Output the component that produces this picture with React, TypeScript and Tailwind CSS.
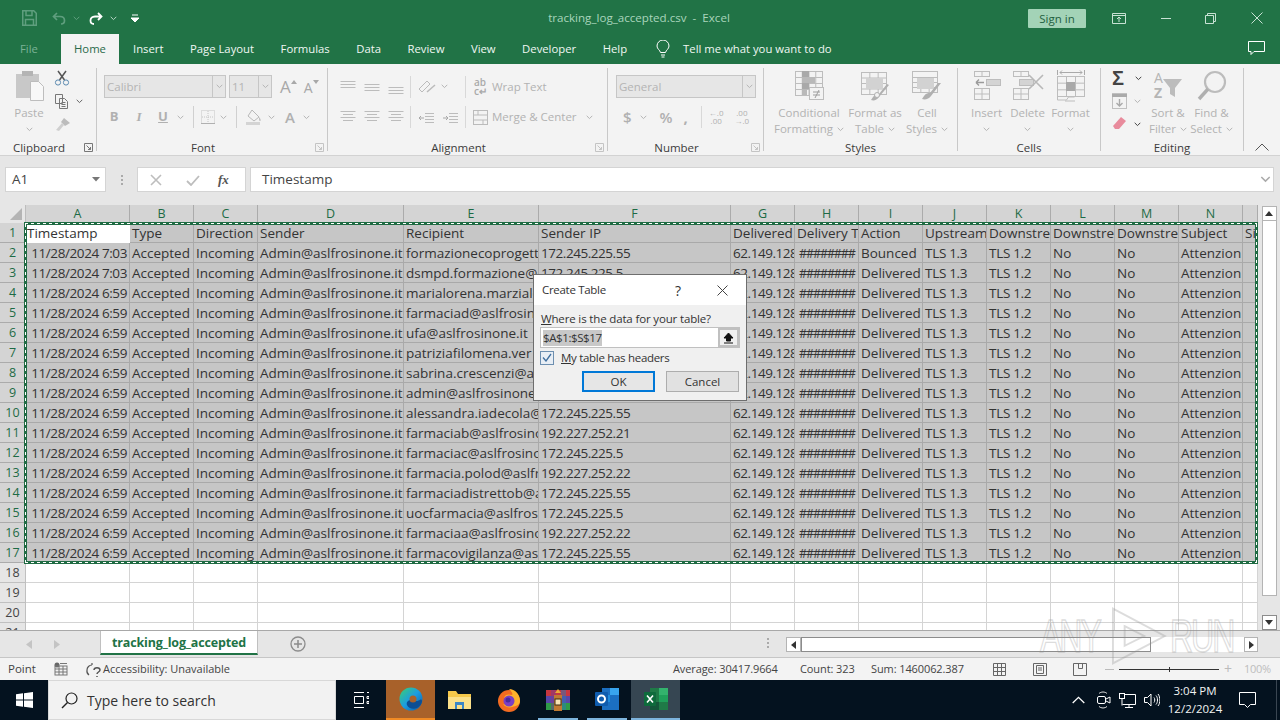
import React from "react";

const G = "#b4b4b4";
const COLS = ["w-[104px]","w-[64px]","w-[64px]","w-[146px]","w-[135px]","w-[192px]","w-[64px]","w-[64px]","w-[64px]","w-[64px]","w-[64px]","w-[64px]","w-[64px]","w-[64px]","w-[15px]"];
const LETTERS = ["A","B","C","D","E","F","G","H","I","J","K","L","M","N",""];
const HEAD = ["Timestamp","Type","Direction","Sender","Recipient","Sender IP","Delivered","Delivery T","Action","Upstream","Downstre","Downstre","Downstre","Subject","Si"];
const ROWS: string[][] = [
  ["11/28/2024 7:03","formazionecoprogett","172.245.225.55","Bounced"],
  ["11/28/2024 7:03","dsmpd.formazione@","172.245.225.5","Delivered"],
  ["11/28/2024 6:59","marialorena.marziale","172.245.225.55","Delivered"],
  ["11/28/2024 6:59","farmaciad@aslfrosin","172.245.225.55","Delivered"],
  ["11/28/2024 6:59","ufa@aslfrosinone.it","172.245.225.55","Delivered"],
  ["11/28/2024 6:59","patriziafilomena.ver","172.245.225.55","Delivered"],
  ["11/28/2024 6:59","sabrina.crescenzi@as","172.245.225.55","Delivered"],
  ["11/28/2024 6:59","admin@aslfrosinone","172.245.225.55","Delivered"],
  ["11/28/2024 6:59","alessandra.iadecola@","172.245.225.55","Delivered"],
  ["11/28/2024 6:59","farmaciab@aslfrosino","192.227.252.21","Delivered"],
  ["11/28/2024 6:59","farmaciac@aslfrosino","172.245.225.5","Delivered"],
  ["11/28/2024 6:59","farmacia.polod@aslfr","192.227.252.22","Delivered"],
  ["11/28/2024 6:59","farmaciadistrettob@a","172.245.225.55","Delivered"],
  ["11/28/2024 6:59","uocfarmacia@aslfrosi","172.245.225.5","Delivered"],
  ["11/28/2024 6:59","farmaciaa@aslfrosino","192.227.252.22","Delivered"],
  ["11/28/2024 6:59","farmacovigilanza@asl","172.245.225.55","Delivered"],
];

const CELL_EXTRA = [
  "text-right pr-[2px] tracking-[-0.4px]",
  "pl-[2px]",
  "pl-[2px]",
  "pl-[2px]",
  "pl-[2px]",
  "pl-[2px] tracking-[-0.45px]",
  "pl-[2px] tracking-[-0.45px]",
  "pl-[4px] tracking-[-1.1px] text-[12.5px]",
  "pl-[2px]",
  "pl-[2px] tracking-[-0.3px]",
  "pl-[2px] tracking-[-0.3px]",
  "pl-[2px]",
  "pl-[2px]",
  "pl-[2px]",
  "pl-[2px]",
];

function rowCells(r: string[]) {
  return [r[0],"Accepted","Incoming","Admin@aslfrosinone.it",r[1],r[2],"62.149.128","########",r[3],"TLS 1.3","TLS 1.2","No","No","Attenzion",""];
}

function Chev({ c = G, className = "" }: { c?: string; className?: string }) {
  return (
    <svg width="7" height="5" viewBox="0 0 7 5" className={className}>
      <path d="M.7 .8 3.5 3.6 6.3 .8" fill="none" stroke={c} strokeWidth="1" />
    </svg>
  );
}

function Launcher({ c = "#8a8a8a" }: { c?: string }) {
  return (
    <svg width="9" height="9" viewBox="0 0 9 9">
      <path d="M.5 8.5V.5h8v8z" fill="none" stroke={c} />
      <path d="M2.5 2.5 6.5 6.5M6.5 4v2.5H4" fill="none" stroke={c} />
    </svg>
  );
}

function Group({ w, label, launcher, dim, children }: { w: string; label: string; launcher?: boolean; dim?: boolean; children: React.ReactNode }) {
  return (
    <div className={`${w} flex h-full shrink-0`}>
      <div className="flex flex-col flex-1 min-w-0">
        <div className="h-[76px] flex">{children}</div>
        <div className="h-[15px] mt-[1px] flex items-center">
          <div className="flex-1 text-center text-[11.5px] leading-[15px] text-[#3c3c3c]">{label}</div>
          {launcher && (
            <div className="w-[18px] flex justify-center pl-[3px]">
              <Launcher c={dim ? "#c4c4c4" : "#777"} />
            </div>
          )}
        </div>
      </div>
      <div className="w-px my-[4px] bg-[#c8c8c8]" />
    </div>
  );
}

function Big({ w, icon, l1, l2 }: { w: string; icon: React.ReactNode; l1: string; l2?: string }) {
  return (
    <div className={`${w} flex flex-col items-center pt-[6px] shrink-0`}>
      <div className="h-[35px] flex items-start justify-center">{icon}</div>
      <div className="text-[11.5px] leading-[16px] text-[#b2b2b2] whitespace-nowrap">{l1}</div>
      <div className="text-[11.5px] leading-[16px] text-[#b2b2b2] whitespace-nowrap flex items-center gap-[4px] h-[16px]">
        {l2 && <span>{l2}</span>}
        <Chev />
      </div>
    </div>
  );
}

function Combo({ w, text, btn = "w-[13px]" }: { w: string; text: string; btn?: string }) {
  return (
    <div className={`${w} h-[23px] bg-[#e6e6e6] border border-[#c6c6c6] flex items-center shrink-0`}>
      <div className="flex-1 pl-[2px] text-[11.5px] text-[#b4b4b4]">{text}</div>
      <div className={`${btn} h-full border-l border-[#c6c6c6] flex items-center justify-center`}>
        <Chev />
      </div>
    </div>
  );
}

function Lines({ widths, ys }: { widths: number[]; ys: number[] }) {
  return (
    <svg width="16" height="14" viewBox="0 0 16 14">
      {ys.map((y, i) => (
        <path key={i} d={`M${(16 - widths[i]) / 2} ${y + 0.5}h${widths[i]}`} stroke="#bcbcbc" />
      ))}
    </svg>
  );
}

function Indent({ flip }: { flip?: boolean }) {
  return (
    <svg width="16" height="13" viewBox="0 0 16 13">
      <path d="M7 2.500h9M7 5.500h9M7 8.500h9M7 11.500h9" stroke="#bcbcbc" />
      <path d={flip ? "M1 7h5M4 5l2 2-2 2" : "M1 7h5M3 5 1 7l2 2"} stroke="#a8a8a8" fill="none" />
    </svg>
  );
}

const CellGrid = ({ x, y, w, h, nx, ny, c = "#bdbdbd" }: { x: number; y: number; w: number; h: number; nx: number; ny: number; c?: string }) => (
  <g stroke={c} fill="none">
    <rect x={x + 0.5} y={y + 0.5} width={w} height={h} />
    {Array.from({ length: nx - 1 }).map((_, i) => (
      <path key={i} d={`M${x + 0.5 + ((i + 1) * w) / nx} ${y}v${h}`} />
    ))}
    {Array.from({ length: ny - 1 }).map((_, i) => (
      <path key={"y" + i} d={`M${x} ${y + 0.5 + ((i + 1) * h) / ny}h${w}`} />
    ))}
  </g>
);

const CondIcon = (
  <svg width="30" height="32" viewBox="0 0 30 32">
    <CellGrid x={1} y={1} w={27} h={24} nx={4} ny={4} />
    <rect x="8" y="1" width="7" height="6" fill="#a9a9a9" />
    <rect x="8" y="7" width="13" height="6" fill="#b9b9b9" />
    <rect x="8" y="13" width="7" height="6" fill="#a9a9a9" />
    <rect x="8" y="19" width="5" height="6" fill="#b9b9b9" />
    <rect x="15.5" y="17.5" width="14" height="12" fill="#f3f3f3" stroke="#bdbdbd" />
    <path d="M19 22h7M19 25h7M25 20l-4 8" stroke="#9d9d9d" fill="none" />
  </svg>
);
const TableIcon = (
  <svg width="30" height="32" viewBox="0 0 30 32">
    <CellGrid x={1} y={2} w={25} h={22} nx={3} ny={4} />
    <rect x="6" y="8" width="17" height="11" fill="#d2d2d2" />
    <path d="M29 15 19 27c-2 3-5 4-8 3l2-3c2-3 4-3 6-3l8-10z" fill="#b0b0b0" />
    <circle cx="17" cy="25" r="2.5" fill="#f3f3f3" stroke="#b0b0b0" />
  </svg>
);
const StylesIcon = (
  <svg width="30" height="32" viewBox="0 0 30 32">
    <rect x=".5" y="1.5" width="25" height="6" fill="#f3f3f3" stroke="#bdbdbd" />
    <CellGrid x={0} y={7} w={25} h={15} nx={3} ny={3} />
    <rect x="5" y="8" width="17" height="11" fill="#d2d2d2" />
    <path d="M29 13 19 26c-2 3-6 4-9 3l2-3c2-3 4-3 6-3l8-10z" fill="#b0b0b0" />
  </svg>
);
const InsertIcon = (
  <svg width="28" height="30" viewBox="0 0 28 30">
    <CellGrid x={1} y={1} w={15} h={5} nx={2} ny={1} />
    <rect x="13.5" y="9.5" width="14" height="6" fill="#d4d4d4" stroke="#bdbdbd" />
    <path d="M3 12.5h8M3 12.5l3-3M3 12.5l3 3" stroke="#9a9a9a" fill="none" strokeWidth="1.4" />
    <CellGrid x={1} y={18} w={15} h={11} nx={2} ny={2} />
  </svg>
);
const DeleteIcon = (
  <svg width="32" height="30" viewBox="0 0 32 30">
    <CellGrid x={1} y={1} w={15} h={5} nx={2} ny={1} />
    <rect x="7.5" y="9.5" width="14" height="6" fill="#d4d4d4" stroke="#bdbdbd" />
    <path d="M17 5 31 19M31 5 17 19" stroke="#b8b8b8" strokeWidth="1.6" fill="none" />
    <CellGrid x={1} y={18} w={15} h={11} nx={2} ny={2} />
  </svg>
);
const FormatIcon = (
  <svg width="30" height="32" viewBox="0 0 30 32">
    <path d="M1.5 0v5M28.5 0v5M4 2.5h22M4 2.5l2-2M4 2.5l2 2M26 2.5l-2-2M26 2.5l-2 2" stroke="#a9a9a9" fill="none" />
    <CellGrid x={1} y={6} w={27} h={20} nx={3} ny={3} />
    <rect x="10" y="12" width="9" height="9" fill="#a9a9a9" />
    <path d="M1.5 26v4h9l2-3h6M9 31h10" stroke="#bdbdbd" fill="none" />
  </svg>
);
const SortIcon = (
  <svg width="32" height="32" viewBox="0 0 32 32">
    <text x="2" y="13" fontSize="14" fontFamily="'Open Sans',sans-serif" fill="#b5b5b5">A</text>
    <text x="2" y="28" fontSize="14" fontWeight="700" fontFamily="'Open Sans',sans-serif" fill="#b5b5b5">Z</text>
    <path d="M11 9h19l-7 9v9l-5-3v-6z" fill="#bcbcbc" />
  </svg>
);
const FindIcon = (
  <svg width="30" height="32" viewBox="0 0 30 32">
    <circle cx="18" cy="12" r="10" fill="none" stroke="#bcbcbc" strokeWidth="2.2" />
    <path d="M11 19 2 29" stroke="#b0b0b0" strokeWidth="3.4" />
  </svg>
);

function Clipboard() {
  return (
    <Group w="w-[97px]" label="Clipboard" launcher>
      <Big
        w="w-[58px]"
        l1="Paste"
        icon={
          <svg width="30" height="32" viewBox="0 0 30 32" className="ml-[2px]">
            <rect x="1" y="4" width="23" height="24" fill="#c8c8c8" />
            <rect x="7" y="1" width="11" height="5" fill="#b4b4b4" />
            <path d="M15.5 11.500h8l5 5v14h-13z" fill="#f8f8f8" stroke="#bdbdbd" />
          </svg>
        }
      />
      <div className="flex flex-col pt-[6px] gap-[8px]">
        <svg width="16" height="16" viewBox="0 0 16 16" className="ml-[-4px]">
          <path d="M4 1 10.500 10M12 1 5.500 10" stroke="#555" strokeWidth="1.5" fill="none" />
          <circle cx="4" cy="12.500" r="2.600" fill="none" stroke="#5b8ab0" />
          <circle cx="12" cy="12.500" r="2.600" fill="none" stroke="#5b8ab0" />
        </svg>
        <div className="flex items-center gap-[6px] ml-[-4px]">
          <svg width="16" height="15" viewBox="0 0 16 15">
            <path d="M1.500 .5h7v9h-7zM5.500 4.500h5l3 3v7h-8z" fill="#f3f3f3" stroke="#777" />
            <path d="M7.500 8.500h4M7.500 10.500h4M7.500 12.500h4" stroke="#777" />
          </svg>
          <Chev c="#666" />
        </div>
        <svg width="16" height="15" viewBox="0 0 16 15" className="ml-[-3px]">
          <path d="M9 1 15 6 10 9 6 5z" fill="#bcbcbc" />
          <path d="M7 6 1 13l3 1 5-6z" fill="#cfcfcf" />
        </svg>
      </div>
    </Group>
  );
}

function Font() {
  return (
    <Group w="w-[231px]" label="Font" launcher dim>
      <div className="flex flex-col pl-[7px] pt-[11px]">
        <div className="flex items-center h-[23px]">
          <Combo w="w-[122px]" text="Calibri" />
          <div className="w-[3px]" />
          <Combo w="w-[43px]" text="11" />
          <span className="ml-[8px] text-[17px] leading-none text-[#a8a8a8]">A</span>
          <svg width="6" height="4" viewBox="0 0 6 4" className="mb-[10px]"><path d="M0 4h6L3 0z" fill="#a8a8a8" /></svg>
          <span className="ml-[7px] text-[14px] leading-none text-[#a8a8a8] mt-[2px]">A</span>
          <svg width="6" height="4" viewBox="0 0 6 4" className="mb-[10px]"><path d="M0 0h6L3 4z" fill="#a8a8a8" /></svg>
        </div>
        <div className="flex items-center h-[22px] mt-[8px] text-[#b0b0b0]">
          <span className="w-[22px] ml-[-1px] text-center text-[13px] font-bold">B</span>
          <span className="w-[24px] ml-[2px] text-center text-[13px] font-bold italic font-['Liberation_Serif',serif]">I</span>
          <span className="w-[24px] text-center text-[13px] font-bold underline">U</span>
          <Chev className="ml-[2px]" />
          <div className="w-px h-[22px] bg-[#d0d0d0] ml-[9px]" />
          <svg width="14" height="14" viewBox="0 0 14 14" className="ml-[7px]">
            <rect x=".5" y=".5" width="13" height="13" fill="none" stroke="#c4c4c4" strokeDasharray="1 1" />
            <path d="M7 1v12M1 7h12" stroke="#c4c4c4" strokeDasharray="1 1" />
            <path d="M0 13.500h14" stroke="#b0b0b0" />
          </svg>
          <Chev className="ml-[5px]" />
          <div className="w-px h-[22px] bg-[#d0d0d0] ml-[9px]" />
          <svg width="16" height="16" viewBox="0 0 16 16" className="ml-[9px]">
            <path d="M6 1 13 8 8 12 2 7z" fill="none" stroke="#b8b8b8" />
            <path d="M13 8c2 2 2 4 1 4s-1-2-1-4z" fill="#bbb" />
            <rect x="0" y="13" width="14" height="3" fill="#d4d4d4" />
          </svg>
          <Chev className="ml-[6px]" />
          <span className="ml-[10px] text-[15px] font-semibold leading-none">A</span>
          <Chev className="ml-[8px]" />
        </div>
      </div>
    </Group>
  );
}

function Alignment() {
  const sep = <div className="w-px h-[22px] bg-[#d8d8d8]" />;
  return (
    <Group w="w-[280px]" label="Alignment" launcher dim>
      <div className="flex flex-col pl-[12px] pt-[11px]">
        <div className="flex items-center h-[23px]">
          <div className="flex gap-[8px]">
            <Lines widths={[15, 15, 15]} ys={[1, 4, 7]} />
            <Lines widths={[15, 15, 15]} ys={[4, 7, 10]} />
            <Lines widths={[15, 15, 15]} ys={[7, 10, 13]} />
          </div>
          <div className="w-[6px]" />
          {sep}
          <svg width="18" height="16" viewBox="0 0 18 16" className="ml-[7px]">
            <path d="M1 10 9 2l3 3-8 8z" fill="none" stroke="#bbb" />
            <path d="M9 13 17 6" stroke="#bbb" strokeWidth="1.500" />
          </svg>
          <Chev className="ml-[5px]" />
          <div className="w-[17px]" />
          {sep}
          <span className="ml-[8px] w-[14px] text-[10px] leading-[9px] font-semibold text-[#aaa]">ab<br />c↵</span>
          <span className="ml-[4px] text-[11.5px] text-[#b2b2b2]">Wrap Text</span>
        </div>
        <div className="flex items-center h-[22px] mt-[8px]">
          <div className="flex gap-[8px]">
            <Lines widths={[15, 10, 15, 10]} ys={[1, 4, 7, 10]} />
            <Lines widths={[15, 10, 15, 10]} ys={[1, 4, 7, 10]} />
            <Lines widths={[15, 10, 15, 10]} ys={[1, 4, 7, 10]} />
          </div>
          <div className="w-[6px]" />
          {sep}
          <div className="ml-[7px]"><Indent /></div>
          <div className="ml-[8px]"><Indent flip /></div>
          <div className="w-[7px]" />
          {sep}
          <svg width="15" height="15" viewBox="0 0 15 15" className="ml-[7px]">
            <rect x=".5" y=".5" width="14" height="14" fill="none" stroke="#bbb" />
            <path d="M0 5h15M0 10h15M5 0v5M10 10v5" stroke="#bbb" />
          </svg>
          <span className="ml-[4px] text-[11.5px] text-[#b2b2b2] whitespace-nowrap">Merge &amp; Center</span>
          <Chev className="ml-[9px]" />
        </div>
      </div>
    </Group>
  );
}

function NumberG() {
  return (
    <Group w="w-[156px]" label="Number" launcher dim>
      <div className="flex flex-col pl-[8px] pt-[11px]">
        <Combo w="w-[140px]" text="General" />
        <div className="flex items-center h-[22px] mt-[8px] text-[#b0b0b0]">
          <span className="ml-[7px] text-[15px] font-semibold">$</span>
          <Chev className="ml-[8px]" />
          <span className="ml-[13px] text-[15px] font-semibold">%</span>
          <span className="ml-[11px] text-[15px] font-bold leading-none">,</span>
          <div className="w-px h-[22px] bg-[#d8d8d8] ml-[13px]" />
          <span className="ml-[7px] text-[8px] leading-[8px] text-center">←.0<br />.00</span>
          <span className="ml-[11px] text-[8px] leading-[8px] text-center">.00<br />→.0</span>
        </div>
      </div>
    </Group>
  );
}

function Editing() {
  return (
    <Group w="w-[143px]" label="Editing">
      <div className="flex flex-col pl-[11px] pt-[6px] w-[45px] shrink-0">
        <div className="flex items-center gap-[7px] h-[16px]">
          <span className="w-[16px] text-[20px] leading-none font-bold text-[#444] font-['Liberation_Sans',sans-serif]">Σ</span>
          <Chev c="#444" />
        </div>
        <div className="flex items-center gap-[7px] h-[16px] mt-[7px]">
          <svg width="15" height="16" viewBox="0 0 15 16">
            <rect x=".5" y=".5" width="14" height="15" fill="none" stroke="#c0c0c0" />
            <path d="M0 2.500h15" stroke="#aaa" strokeWidth="3" />
            <path d="M7.500 6v7M4.500 10l3 3 3-3" stroke="#aaa" fill="none" strokeWidth="1.400" />
          </svg>
          <Chev />
        </div>
        <div className="flex items-center gap-[7px] h-[16px] mt-[7px]">
          <svg width="15" height="14" viewBox="0 0 15 14">
            <path d="M9 0 14 4 7 12H3L1 9z" fill="#e88b9c" />
          </svg>
          <Chev c="#444" />
        </div>
      </div>
      <Big w="w-[44px]" l1="Sort &" l2="Filter" icon={SortIcon} />
      <Big w="w-[43px]" l1="Find &" l2="Select" icon={FindIcon} />
    </Group>
  );
}

function Ribbon() {
  return (
    <div className="h-[92px] bg-[#f3f3f3] flex border-b border-[#d2d2d2] relative">
      <Clipboard />
      <Font />
      <Alignment />
      <NumberG />
      <Group w="w-[194px]" label="Styles">
        <div className="w-[14px]" />
        <Big w="w-[62px]" l1="Conditional" l2="Formatting" icon={CondIcon} />
        <Big w="w-[70px]" l1="Format as" l2="Table" icon={TableIcon} />
        <Big w="w-[34px]" l1="Cell" l2="Styles" icon={StylesIcon} />
      </Group>
      <Group w="w-[143px]" label="Cells">
        <div className="w-[8px]" />
        <Big w="w-[41px]" l1="Insert" icon={InsertIcon} />
        <Big w="w-[41px]" l1="Delete" icon={DeleteIcon} />
        <Big w="w-[45px]" l1="Format" icon={FormatIcon} />
      </Group>
      <Editing />
      <div className="flex-1 flex items-end justify-center pb-[4px]">
        <svg width="14" height="8" viewBox="0 0 14 8">
          <path d="M.5 7.500 7 1l6.500 6.500" fill="none" stroke="#555" />
        </svg>
      </div>
    </div>
  );
}

function TitleBar() {
  return (
    <div className="h-[36px] flex items-center text-[#a9d5bc]">
      <div className="w-[548px] flex items-center pl-[22px]">
        <svg width="15" height="16" viewBox="0 0 15 16">
          <path d="M.75.75h11l2.500 2.500v12h-13.500z" fill="none" stroke="#5f9e7e" strokeWidth="1.500" />
          <path d="M4 1v4.500h6V1M3.500 15V9.500h8V15" fill="none" stroke="#5f9e7e" strokeWidth="1.500" />
        </svg>
        <svg width="14" height="13" viewBox="0 0 14 13" className="ml-[15px]">
          <path d="M5 1 1.500 4.500 5 8M2 4.500h6c3 0 4.500 2 4.500 4S11 12 9 12" fill="none" stroke="#5f9e7e" strokeWidth="1.700" />
        </svg>
        <Chev c="#5f9e7e" className="ml-[7px]" />
        <svg width="15" height="13" viewBox="0 0 15 13" className="ml-[8px]">
          <path d="M10 1l3.500 3.500L10 8M13 4.500H7c-3 0-4.500 2-4.500 4S4 12 6 12" fill="none" stroke="#fff" strokeWidth="1.800" />
        </svg>
        <Chev c="#b7d6c5" className="ml-[7px]" />
        <svg width="8" height="8" viewBox="0 0 8 8" className="ml-[14px]">
          <path d="M1 1h6M0 4h8L4 8z" stroke="#fff" fill="#fff" />
        </svg>
      </div>
      <div className="w-[182px] whitespace-pre text-[11.6px] text-center">tracking_log_accepted.csv  -  Excel</div>
      <div className="w-[298px]" />
      <div className="w-[58px] h-[19px] bg-[#a3d3b7] text-[#1f6040] text-[11.5px] text-center leading-[19px] rounded-[1px]">Sign in</div>
      <svg width="14" height="11" viewBox="0 0 14 11" className="ml-[26px]">
        <path d="M.5.5h13v10H.5zM0 2.500h14M7 9V4.500M5 6l2-2 2 2" fill="none" stroke="#c8e2d4" />
      </svg>
      <div className="w-[10px] h-px bg-[#c8e2d4] ml-[35px]" />
      <svg width="11" height="11" viewBox="0 0 11 11" className="ml-[34px]">
        <path d="M.5 2.500h8v8h-8zM2.500 2.500v-2h8v8h-2" fill="none" stroke="#c8e2d4" />
      </svg>
      <svg width="12" height="12" viewBox="0 0 12 12" className="ml-[35px]">
        <path d="M.5.5l11 11M11.500.5l-11 11" stroke="#c8e2d4" />
      </svg>
    </div>
  );
}

function Tabs() {
  return (
    <div className="h-[28px] flex items-stretch text-[11.3px] text-[#f0f7f3] relative">
      <div className="w-[61px] pl-[20px] leading-[26px] text-[#7bb296]">File</div>
      <div className="w-[58px] h-[30px] mt-[-2px] bg-[#f3f3f3] text-center leading-[30px] text-[#2a6a4a]">Home</div>
      <div className="flex gap-[26.5px] pl-[14px] leading-[26px] whitespace-nowrap">
        <span>Insert</span>
        <span>Page Layout</span>
        <span>Formulas</span>
        <span>Data</span>
        <span>Review</span>
        <span>View</span>
        <span>Developer</span>
        <span>Help</span>
      </div>
      <svg width="14" height="18" viewBox="0 0 14 18" className="ml-[29px] mt-[4px]">
        <path d="M4.500 12.500C4 10 1 9 1 6a6 6 0 0 1 12 0c0 3-3 4-3.500 6.500zM5 15h4M5.500 17h3" fill="none" stroke="#fff" />
      </svg>
      <span className="ml-[13px] leading-[26px] whitespace-nowrap">Tell me what you want to do</span>
      <div className="flex-1" />
      <svg width="17" height="15" viewBox="0 0 17 15" className="mr-[15px] mt-[5px]">
        <path d="M.5.5h16v10H6l-3 3v-3H.5z" fill="none" stroke="#fff" />
      </svg>
    </div>
  );
}

function FormulaBar() {
  return (
    <div className="h-[49px] bg-[#e6e6e6] flex pt-[11px] pl-[5px] pr-[6px] text-[13.5px] text-[#444]">
      <div className="w-[101px] h-[25px] bg-white border border-[#d4d4d4] flex items-center pl-[6px] justify-between pr-[5px]">
        A1
        <svg width="8" height="5" viewBox="0 0 8 5"><path d="M0 0h8L4 4.500z" fill="#777" /></svg>
      </div>
      <div className="w-[31px] h-[25px] flex flex-col items-center justify-center gap-[2px]">
        <i className="w-[2px] h-[2px] bg-[#aaa]" />
        <i className="w-[2px] h-[2px] bg-[#aaa]" />
        <i className="w-[2px] h-[2px] bg-[#aaa]" />
      </div>
      <div className="w-[109px] h-[25px] bg-white border border-[#d4d4d4] flex items-center">
        <svg width="12" height="12" viewBox="0 0 12 12" className="ml-[12px]">
          <path d="M1 1l10 10M11 1 1 11" stroke="#bdbdbd" strokeWidth="1.600" />
        </svg>
        <svg width="14" height="12" viewBox="0 0 14 12" className="ml-[24px]">
          <path d="M1 7l4 4 8-9" fill="none" stroke="#bdbdbd" strokeWidth="1.800" />
        </svg>
        <span className="ml-[18px] text-[13px] italic font-bold font-['Liberation_Serif',serif] text-[#555]">fx</span>
      </div>
      <div className="w-[4px]" />
      <div className="flex-1 h-[25px] bg-white border border-[#d4d4d4] flex items-center pl-[11px] justify-between pr-[4px]">
        Timestamp
        <Chev c="#aaa" className="scale-150" />
      </div>
    </div>
  );
}

function Sheet() {
  return (
    <div className="h-[426px] flex border-b border-[#a8a8a8] bg-[#e6e6e6]">
      <div className="w-[1258px] h-full overflow-hidden bg-white text-[13.500px] text-[#333] relative">
        <div className="flex h-[18px] bg-[#d4d4d4]">
          <div className="w-[26px] shrink-0 bg-[#e6e6e6] flex items-end justify-end pr-[3px] pb-[3px] border-r border-[#bdbdbd]">
            <svg width="12" height="12" viewBox="0 0 12 12"><path d="M12 0v12H0z" fill="#b4b4b4" /></svg>
          </div>
          {COLS.map((c, i) => (
            <div key={i} className={`${c} shrink-0 border-r border-[#ababab] text-center leading-[17px] text-[12.500px] text-[#1d6b45]`}>
              {LETTERS[i]}
            </div>
          ))}
        </div>
        <div className="flex h-[20px]">
          <div className="w-[26px] shrink-0 bg-[#d4d4d4] border-r border-b border-[#ababab] text-center leading-[20px] text-[12.500px] text-[#1d6b45]">1</div>
          {COLS.map((c, i) => (
            <div key={i} className={`${c} shrink-0 border-r border-b overflow-hidden whitespace-nowrap leading-[21px] ${i === 0 ? "pl-[1px] bg-white border-white" : "pl-[2px] bg-[#c6c6c6] border-[#a9a9a9]"}`}>
              {HEAD[i]}
            </div>
          ))}
        </div>
        {ROWS.map((r, n) => (
          <div key={n} className="flex h-[20px]">
            <div className="w-[26px] shrink-0 bg-[#d4d4d4] border-r border-b border-[#ababab] text-center leading-[20px] text-[12.500px] text-[#1d6b45]">{n + 2}</div>
            {rowCells(r).map((t, i) => (
              <div
                key={i}
                className={`${COLS[i]} shrink-0 border-r border-b border-[#a9a9a9] bg-[#c6c6c6] overflow-hidden whitespace-nowrap leading-[21px] ${CELL_EXTRA[i]}`}
              >
                {t}
              </div>
            ))}
          </div>
        ))}
        {[18, 19, 20, 21].map((n) => (
          <div key={n} className="flex h-[20px]">
            <div className="w-[26px] shrink-0 bg-[#e6e6e6] border-r border-b border-[#c0c0c0] text-center leading-[20px] text-[12.500px] text-[#444]">{n}</div>
            {COLS.map((c, i) => (
              <div key={i} className={`${c} shrink-0 border-r border-b border-[#d4d4d4]`} />
            ))}
          </div>
        ))}
        <div className="absolute left-[24px] top-[17px] w-[1234px] h-[342px] border-[3px] border-[#1f6b43]">
          <div className="absolute -left-[2px] -right-[2px] -top-[2px] h-px bg-[repeating-linear-gradient(90deg,#fff_0_3px,transparent_3px_6px)]" />
          <div className="absolute -left-[2px] -right-[2px] -bottom-[2px] h-px bg-[repeating-linear-gradient(90deg,#fff_0_3px,transparent_3px_6px)]" />
          <div className="absolute -top-[2px] -bottom-[2px] -left-[2px] w-px bg-[repeating-linear-gradient(0deg,#fff_0_3px,transparent_3px_6px)]" />
          <div className="absolute -top-[2px] -bottom-[2px] -right-[2px] w-px bg-[repeating-linear-gradient(0deg,#fff_0_3px,transparent_3px_6px)]" />
        </div>
      </div>
      <div className="flex-1 flex flex-col items-center pt-[1px]">
        <div className="w-[15px] h-[15px] bg-white border border-[#b4b4b4] flex items-center justify-center">
          <svg width="8" height="5" viewBox="0 0 8 5"><path d="M0 5h8L4 0z" fill="#333" /></svg>
        </div>
        <div className="w-[15px] flex-1 bg-white border-x border-b border-[#b4b4b4] mb-[19px]" />
        <div className="w-[15px] h-[15px] bg-white border border-[#8c8c8c] flex items-center justify-center">
          <svg width="8" height="5" viewBox="0 0 8 5"><path d="M0 0h8L4 5z" fill="#333" /></svg>
        </div>
      </div>
    </div>
  );
}

function SheetTabs() {
  return (
    <div className="h-[27px] bg-[#e6e6e6] flex items-start border-b border-[#c6c6c6]">
      <svg width="6" height="9" viewBox="0 0 6 9" className="ml-[26px] mt-[9px]"><path d="M6 0v9L0 4.500z" fill="#c4c4c4" /></svg>
      <svg width="6" height="9" viewBox="0 0 6 9" className="ml-[22px] mt-[9px]"><path d="M0 0v9l6-4.500z" fill="#c4c4c4" /></svg>
      <div className="ml-[40px] w-[158px] h-[24px] bg-white border-x border-b-2 border-x-[#c0c0c0] border-b-[#217346] text-center text-[12.500px] font-bold leading-[24px] text-[#217346] tracking-[-0.15px]">
        tracking_log_accepted
      </div>
      <svg width="16" height="16" viewBox="0 0 16 16" className="ml-[32px] mt-[5px]">
        <circle cx="8" cy="8" r="7" fill="none" stroke="#8c8c8c" strokeWidth="1.300" />
        <path d="M8 4v8M4 8h8" stroke="#8c8c8c" strokeWidth="1.500" />
      </svg>
      <div className="ml-[461px] mt-[7px] flex flex-col gap-[2px]">
        <i className="w-[2px] h-[2px] bg-[#aaa]" />
        <i className="w-[2px] h-[2px] bg-[#aaa]" />
        <i className="w-[2px] h-[2px] bg-[#aaa]" />
      </div>
      <div className="ml-[17px] mt-[6px] w-[472px] h-[15px] flex">
        <div className="w-[15px] h-[15px] bg-white border border-[#b4b4b4] flex items-center justify-center">
          <svg width="5" height="8" viewBox="0 0 5 8"><path d="M5 0v8L0 4z" fill="#333" /></svg>
        </div>
        <div className="w-[350px] h-[15px] bg-white border border-[#8c8c8c]" />
        <div className="flex-1 bg-white" />
        <div className="w-[14px] h-[15px] bg-white border border-[#b4b4b4] flex items-center justify-center">
          <svg width="5" height="8" viewBox="0 0 5 8"><path d="M0 0v8l5-4z" fill="#333" /></svg>
        </div>
      </div>
    </div>
  );
}

function StatusBar() {
  return (
    <div className="h-[22px] bg-[#f3f3f3] flex items-center text-[11px] text-[#444] whitespace-nowrap">
      <span className="ml-[8px] w-[46px] text-[11.500px]">Point</span>
      <svg width="14" height="14" viewBox="0 0 14 14">
        <circle cx="3" cy="3" r="2.500" fill="#666" />
        <rect x="1" y="4" width="12" height="9" fill="none" stroke="#777" />
        <path d="M1 7h12M1 10h12M5 4v9M9 4v9M6 1.500h7" stroke="#777" />
      </svg>
      <svg width="16" height="15" viewBox="0 0 16 15" className="ml-[17px]">
        <path d="M2 8a5 5 0 0 1 5-5M4 13a5 5 0 0 1-2-5M7 3V1" fill="none" stroke="#555" strokeWidth="1.200" />
        <path d="M9 8c0-3 6-3 6 0 0 2-3 2-3 4M12 14v1" fill="none" stroke="#555" strokeWidth="1.500" />
      </svg>
      <span className="ml-[2px] w-[570px]">Accessibility: Unavailable</span>
      <span className="w-[127px] tracking-[-0.1px]">Average: 30417.9664</span>
      <span className="w-[71px] tracking-[-0.1px]">Count: 323</span>
      <span className="w-[122px] tracking-[-0.1px]">Sum: 1460062.387</span>
      <svg width="14" height="13" viewBox="0 0 14 13">
        <path d="M.5.5h12v12H.5zM.5 4.500h12M.5 8.500h12M4.500.5v12M8.500.5v12" fill="none" stroke="#666" />
      </svg>
      <svg width="14" height="13" viewBox="0 0 14 13" className="ml-[26px]">
        <path d="M.5.5h13v12H.5zM3.500 2.500h7v8h-7zM5 5h4M5 7h4" fill="none" stroke="#666" />
      </svg>
      <svg width="14" height="13" viewBox="0 0 14 13" className="ml-[26px]">
        <path d="M.5.5h13v12H.5zM5.500.5v5h4v-5" fill="none" stroke="#666" />
      </svg>
      <span className="ml-[18px] w-[9px] h-px bg-[#bbb]" />
      <div className="ml-[5px] w-[100px] h-px bg-[#333] flex justify-center items-center">
        <i className="w-px h-[5px] bg-[#333]" />
      </div>
      <span className="ml-[5px] w-[20px] text-[#bbb] text-[14px] leading-none">+</span>
      <span className="text-[#bdbdbd] tracking-[-0.3px]">100%</span>
    </div>
  );
}

function Dialog() {
  return (
    <div className="absolute left-[533px] top-[274px] w-[214px] h-[127px] bg-[#f0f0f0] border border-[#6e6e6e] text-[#333] text-[11.5px] flex flex-col">
      <div className="h-[30px] bg-white flex items-center pl-[8px] shrink-0">
        <span className="w-[133px] tracking-[-0.3px]">Create Table</span>
        <span className="text-[14px]">?</span>
        <svg width="11" height="11" viewBox="0 0 11 11" className="ml-[36px]">
          <path d="M.5.5l10 10M10.500.5l-10 10" stroke="#444" />
        </svg>
      </div>
      <div className="pl-[7px] pt-[6px] leading-[16px] tracking-[-0.15px] whitespace-nowrap"><u>W</u>here is the data for your table?</div>
      <div className="flex ml-[6px] h-[21px] w-[200px] border border-[#c0c0c0] bg-white">
        <div className="flex-1 pl-[2px] flex items-center">
          <span className="bg-[#c8c8c8] leading-[16px] tracking-[-0.4px]">$A$1:$S$17</span>
        </div>
        <div className="w-[21px] bg-[#f0f0f0] border-2 border-[#c0c0c0] flex items-center justify-center">
          <svg width="11" height="12" viewBox="0 0 11 12"><path d="M5.500 1 1 6h2.500v3h4V6H10zM1 11h9" fill="#111" stroke="#111" /></svg>
        </div>
      </div>
      <div className="flex items-center ml-[6px] mt-[2px] h-[15px]">
        <div className="w-[14px] h-[14px] border border-[#6d8fb0] bg-[#e8eef5] flex items-center justify-center">
          <svg width="10" height="9" viewBox="0 0 10 9"><path d="M1 4.500 4 8l5-7" fill="none" stroke="#3f6f9f" strokeWidth="1.300" /></svg>
        </div>
        <span className="ml-[7px] tracking-[-0.3px]"><u>M</u>y table has headers</span>
      </div>
      <div className="flex ml-[48px] mt-[6px]">
        <div className="w-[73px] h-[21px] bg-[#e6e6e6] border-2 border-[#0078d7] text-center leading-[17px]">OK</div>
        <div className="ml-[11px] w-[73px] h-[21px] bg-[#e1e1e1] border border-[#adadad] text-center leading-[19px]">Cancel</div>
      </div>
    </div>
  );
}

function Taskbar() {
  return (
    <div className="h-[40px] bg-[#04121f] flex items-stretch text-white">
      <div className="w-[48px] flex items-center justify-center">
        <svg width="17" height="16" viewBox="0 0 17 16">
          <path d="M0 2.300 7 1.300v6.300H0zM8 1.200 17 0v7.600H8zM0 8.500h7v6.300L0 13.700zM8 8.500h9V16L8 14.800z" fill="#fff" />
        </svg>
      </div>
      <div className="w-[288px] bg-[#f2f2f2] flex items-center border border-[#d8d8d8]">
        <svg width="17" height="17" viewBox="0 0 17 17" className="ml-[12px]">
          <circle cx="10.500" cy="6.500" r="5.500" fill="none" stroke="#222" strokeWidth="1.200" />
          <path d="M6.500 10.500 1 16" stroke="#222" strokeWidth="1.400" />
        </svg>
        <span className="ml-[9px] text-[14px] text-[#333]">Type here to search</span>
      </div>
      <div className="w-[50px] flex items-center justify-center">
        <svg width="16" height="16" viewBox="0 0 16 16">
          <path d="M1 .5h10M1 15.500h10M1.500 4.500h9v7h-9zM14 .5h2M14 4.500h2v2h-2zM14 9.500h2v2h-2z" fill="none" stroke="#fff" />
        </svg>
      </div>
      <div className="w-[49px] bg-[#a8612a] border-b-[2px] border-[#f08a24] flex items-center justify-center">
        <svg width="24" height="24" viewBox="0 0 24 24">
          <defs>
            <linearGradient id="ed" x1="0" y1="0" x2="1" y2="1">
              <stop offset="0" stopColor="#3bd16f" />
              <stop offset=".5" stopColor="#1b9de2" />
              <stop offset="1" stopColor="#0c59a4" />
            </linearGradient>
          </defs>
          <circle cx="12" cy="12" r="11.500" fill="url(#ed)" />
          <path d="M13 13c-4 0-6 2-5 5 1 3 6 5 10 3 3-2 5-4 5-7 0-1-1-2-2-1-2 1-3 1-5 1-2 0-3-1-3-1z" fill="#0c4e94" />
          <circle cx="14" cy="12" r="3.500" fill="#a8612a" />
        </svg>
      </div>
      <div className="w-[49px] flex items-center justify-center">
        <svg width="23" height="20" viewBox="0 0 23 20">
          <path d="M0 1h8l2 3h13v15H0z" fill="#f5c84b" />
          <path d="M0 7h23v12H0z" fill="#fbe08a" />
          <path d="M7 12h9v7H7z" fill="#3b86c6" />
          <path d="M9 15h5v4H9z" fill="#fbe08a" />
        </svg>
      </div>
      <div className="w-[49px] flex items-center justify-center">
        <svg width="24" height="24" viewBox="0 0 24 24">
          <circle cx="12" cy="13" r="11" fill="#f26b21" />
          <path d="M23 13C23 6 18 1 12 1c3 3 4 5 3 6-3-1-7-1-8 3 3-1 4 1 4 3 0 3-3 4-5 3 2 3 6 4 9 3 4-1 8-2 8-6z" fill="#ffb22b" />
          <circle cx="12" cy="13" r="5.500" fill="#7b3fc4" />
          <circle cx="11" cy="12" r="2.500" fill="#4a2a9e" />
        </svg>
      </div>
      <div className="w-[49px] flex flex-col items-center">
        <div className="flex-1 flex items-center">
          <svg width="24" height="24" viewBox="0 0 24 24">
            <rect x="0" y="3" width="24" height="6" fill="#c7363f" />
            <rect x="0" y="9" width="24" height="7" fill="#5a46a8" />
            <rect x="0" y="16" width="24" height="7" fill="#2f9a48" />
            <rect x="5" y="3" width="5" height="20" fill="#7a3a8e" opacity=".5" />
            <rect x="15" y="3" width="5" height="20" fill="#2a7ab8" opacity=".5" />
            <rect x="8" y="8" width="8" height="16" fill="#c07a32" />
            <rect x="9" y="12" width="6" height="6" fill="#f6e3b4" stroke="#3a2a10" />
            <path d="M12 2l3 4H9z" fill="#e9a93a" />
          </svg>
        </div>
        <div className="w-[40px] h-[2px] bg-[#7db4dd]" />
      </div>
      <div className="w-[49px] flex flex-col items-center">
        <div className="flex-1 flex items-center">
          <svg width="24" height="22" viewBox="0 0 24 22">
            <rect x="7" y="0" width="17" height="22" fill="#1b6fc2" />
            <rect x="15" y="0" width="9" height="7" fill="#38a4ee" />
            <rect x="7" y="7" width="8" height="7" fill="#1f8bdc" />
            <rect x="15" y="7" width="9" height="7" fill="#1b6fc2" />
            <rect x="0" y="4" width="13" height="14" rx="1" fill="#0f5cae" />
            <circle cx="6.500" cy="11" r="3.500" fill="none" stroke="#fff" strokeWidth="2" />
          </svg>
        </div>
        <div className="w-[40px] h-[2px] bg-[#7db4dd]" />
      </div>
      <div className="w-[49px] bg-[#364652] border-b-[2px] border-[#7db4dd] flex items-center justify-center">
        <svg width="24" height="22" viewBox="0 0 24 22">
          <rect x="6" y="0" width="18" height="22" fill="#1f7a47" />
          <rect x="15" y="0" width="9" height="7" fill="#33b36d" />
          <rect x="15" y="7" width="9" height="7" fill="#1fa05a" />
          <rect x="6" y="14" width="9" height="8" fill="#14573a" />
          <rect x="0" y="4" width="12" height="14" rx="1" fill="#0e6b3c" />
          <path d="M3 7.500l6 7M9 7.500l-6 7" stroke="#fff" strokeWidth="1.600" />
        </svg>
      </div>
      <div className="flex-1" />
      <svg width="13" height="8" viewBox="0 0 13 8" className="self-center">
        <path d="M.7 7 6.500 1.300 12.300 7" fill="none" stroke="#fff" strokeWidth="1.300" />
      </svg>
      <svg width="15" height="18" viewBox="0 0 15 18" className="self-center ml-[11px]">
        <path d="M3 2.500c2-2 6-2 8 0M3 15.500c2 2 6 2 8 0" fill="none" stroke="#ddd" />
        <rect x="1.500" y="5.500" width="8" height="7" rx="1.500" fill="none" stroke="#fff" />
        <path d="M10 8l4-2v6l-4-2" fill="none" stroke="#fff" />
      </svg>
      <svg width="17" height="15" viewBox="0 0 17 15" className="self-center ml-[8px]">
        <path d="M3.500 1.500h13v10h-13M10 11.500v3M6 14.500h8" fill="none" stroke="#fff" />
        <rect x=".5" y=".5" width="5" height="5" fill="#04121f" stroke="#fff" />
        <path d="M3 5.500v7" stroke="#fff" />
      </svg>
      <svg width="16" height="14" viewBox="0 0 16 14" className="self-center ml-[8px]">
        <path d="M.5 4.500h3L7 1v12L3.500 9.500h-3zM10 4.500c1 1 1 4 0 5M12 2.500c2 2 2 7 0 9M14 1c2.500 3 2.500 9 0 12" fill="none" stroke="#fff" />
      </svg>
      <div className="w-[64px] ml-[3px] flex flex-col items-center justify-center text-[11.5px] leading-[18px] text-[#f2f2f2]">
        <span>3:04 PM</span>
        <span>12/2/2024</span>
      </div>
      <svg width="17" height="16" viewBox="0 0 17 16" className="self-center ml-[12px]">
        <path d="M.5.5h16v12h-5l-3 3-3-3h-5z" fill="none" stroke="#fff" />
      </svg>
      <div className="w-[3px] ml-[20px] mr-[1px] border-l border-[#3a4652]" />
    </div>
  );
}

export default function App() {
  return (
    <div className="relative w-[1280px] h-[720px] overflow-hidden bg-[#217346] font-['Open_Sans','Noto_Sans',sans-serif]">
      <TitleBar />
      <Tabs />
      <Ribbon />
      <FormulaBar />
      <Sheet />
      <SheetTabs />
      <StatusBar />
      <Taskbar />
      <Dialog />
      <div className="absolute left-[1040px] top-[606px] h-[60px] w-[190px] flex items-center text-[32px] leading-none text-transparent opacity-30 [-webkit-text-stroke:1px_#8f8f8f] font-['Liberation_Sans',sans-serif] pointer-events-none">
        <span className="w-[73px] scale-y-[1.45] origin-center tracking-[-2px]">ANY</span>
        <svg width="57" height="60" viewBox="0 0 57 60"><path d="M2 2 55 30 2 58zM14 20l20 10-20 10z" fill="none" stroke="#8f8f8f" strokeWidth="2" /></svg>
        <span className="w-[60px] scale-y-[1.45] origin-center tracking-[-2px] ml-[3px]">RUN</span>
      </div>
    </div>
  );
}
